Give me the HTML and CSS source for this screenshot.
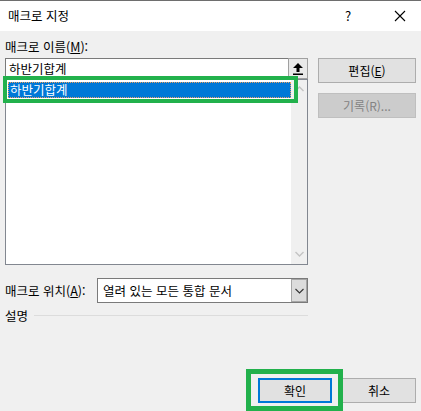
FILE: index.html
```html
<!DOCTYPE html>
<html lang="ko">
<head>
    <meta charset="UTF-8">
    <title>매크로 지정</title>
    <link rel="stylesheet" href="styles.css">
</head>
<body>
    <div class="dialog">
        <div class="titlebar">
            <span class="title">매크로 지정</span>
            <span class="help">?</span>
            <svg class="close" width="12" height="12" viewBox="0 0 12 12">
                <path d="M1 1 L11 11 M11 1 L1 11" stroke="#000" stroke-width="1.1" fill="none"/>
            </svg>
        </div>

        <div class="content">
            <div class="name-label">매크로 이름(<u>M</u>):</div>

            <div class="main-row">
                <div class="left-col">
                    <div class="input-row">
                        <div class="name-input">하반기합계</div>
                        <div class="up-btn">
                            <svg width="10" height="12" viewBox="0 0 10 12">
                                <path d="M5 0 L10 5 L6.5 5 L6.5 9 L3.5 9 L3.5 5 L0 5 Z" fill="#000"/>
                                <rect x="0" y="10.5" width="10" height="1.5" fill="#000"/>
                            </svg>
                        </div>
                    </div>
                    <div class="macro-list">
                        <div class="items">
                            <div class="item selected">하반기합계</div>
                        </div>
                        <div class="scrollbar">
                            <svg width="9" height="6" viewBox="0 0 9 6"><path d="M0.5 5 L4.5 1 L8.5 5" stroke="#c4c4c4" stroke-width="1.4" fill="none"/></svg>
                            <svg width="9" height="6" viewBox="0 0 9 6"><path d="M0.5 1 L4.5 5 L8.5 1" stroke="#c4c4c4" stroke-width="1.4" fill="none"/></svg>
                        </div>
                    </div>
                </div>

                <div class="right-col">
                    <button class="btn">편집(<u>E</u>)</button>
                    <button class="btn disabled">기록(R)...</button>
                </div>
            </div>

            <div class="location-row">
                <span class="loc-label">매크로 위치(<u>A</u>):</span>
                <div class="select">
                    <span class="select-text">열려 있는 모든 통합 문서</span>
                    <span class="select-btn">
                        <svg width="9" height="6" viewBox="0 0 9 6"><path d="M0.5 1 L4.5 5 L8.5 1" stroke="#333" stroke-width="1.1" fill="none"/></svg>
                    </span>
                </div>
            </div>

            <div class="desc-row">
                <span>설명</span>
                <span class="desc-line"></span>
            </div>

            <div class="footer">
                <button class="btn default">확인</button>
                <button class="btn">취소</button>
            </div>
        </div>

        <div class="mark mark-item"></div>
        <div class="mark mark-ok"></div>
    </div>
</body>
</html>
```

FILE: styles.css
```css
body {
    margin: 0;
    font-family: "Noto Sans CJK KR", "Noto Sans", sans-serif;
    font-size: 12.5px;
    color: #000;
    background: #f0f0f0;
}

.dialog {
    position: relative;
    width: 421px;
    height: 411px;
    overflow: hidden;
    display: flex;
    flex-direction: column;
    background: #f0f0f0;
}

.titlebar {
    height: 30px;
    border-top: 1px solid #6e6e6e;
    background: #fff;
    display: flex;
    align-items: center;
    padding-left: 8px;
}

.title {
    flex: 1;
    line-height: 16px;
}

.help {
    width: 14px;
    margin-right: 35px;
    font-size: 13px;
    line-height: 16px;
}

.close {
    margin-right: 15px;
}

.content {
    flex: 1;
    display: flex;
    flex-direction: column;
    padding: 8px 5px 8px 5px;
}

.name-label {
    line-height: 16px;
    margin-bottom: 3px;
}

u {
    text-decoration: underline;
    text-underline-offset: 1px;
}

.main-row {
    display: flex;
    gap: 10px;
}

.left-col {
    width: 303px;
}

.input-row {
    display: flex;
    height: 21px;
}

.name-input {
    width: 281px;
    height: 19px;
    border: 1px solid #7a7a7a;
    border-right: none;
    background: #fff;
    padding-left: 3px;
    line-height: 19px;
    font-size: 12.5px;
}

.up-btn {
    width: 18px;
    height: 19px;
    border: 1px solid #a0a0a0;
    background: #e9e9e9;
    display: flex;
    align-items: center;
    justify-content: center;
}

.macro-list {
    height: 184px;
    border: 1px solid #828790;
    background: #fff;
    display: flex;
}

.items {
    flex: 1;
    padding: 2px 0 0 2px;
}

.item {
    height: 16px;
    line-height: 16px;
    padding-left: 2px;
    font-size: 12.5px;
}

.selected {
    background: #0078d7;
    color: #fff;
    outline: 1px dotted #e8a060;
    outline-offset: -1px;
}

.scrollbar {
    width: 16px;
    background: #f0f0f0;
    display: flex;
    flex-direction: column;
    align-items: center;
    justify-content: space-between;
    padding: 6px 0 7px 0;
}

.right-col {
    width: 98px;
    display: flex;
    flex-direction: column;
    gap: 10px;
}

.btn {
    height: 25px;
    border: 1px solid #adadad;
    background: #e1e1e1;
    font-family: inherit;
    font-size: 12px;
    color: #000;
    padding: 0;
}

.right-col .btn {
    width: 98px;
}

.btn.disabled {
    color: #838383;
    border-color: #bfbfbf;
    background: #cccccc;
}

.location-row {
    display: flex;
    align-items: center;
    margin-top: 13px;
    height: 25px;
}

.loc-label {
    width: 92px;
}

.select {
    width: 209px;
    height: 23px;
    border: 1px solid #7a7a7a;
    background: #fff;
    display: flex;
    align-items: center;
}

.select-text {
    flex: 1;
    padding-left: 5px;
    font-size: 12.5px;
}

.select-btn {
    width: 14px;
    height: 21px;
    border: 1px solid #a6a6a6;
    background: #dcdcdc;
    display: flex;
    align-items: center;
    justify-content: center;
}

.desc-row {
    display: flex;
    align-items: center;
    gap: 6px;
    margin-top: 4px;
    height: 16px;
    width: 303px;
}

.desc-line {
    flex: 1;
    height: 1px;
    background: #dcdcdc;
}

.footer {
    margin-top: auto;
    display: flex;
    justify-content: flex-end;
    gap: 10px;
}

.footer .btn {
    width: 74px;
}

.btn.default {
    border: 2px solid #0078d7;
}

.mark {
    position: absolute;
    border: 4px solid #22b14c;
}

.mark-item {
    left: 3px;
    top: 76px;
    width: 287px;
    height: 19px;
}

.mark-ok {
    left: 246px;
    top: 369px;
    width: 87px;
    height: 32px;
    border-width: 5px;
}
```
